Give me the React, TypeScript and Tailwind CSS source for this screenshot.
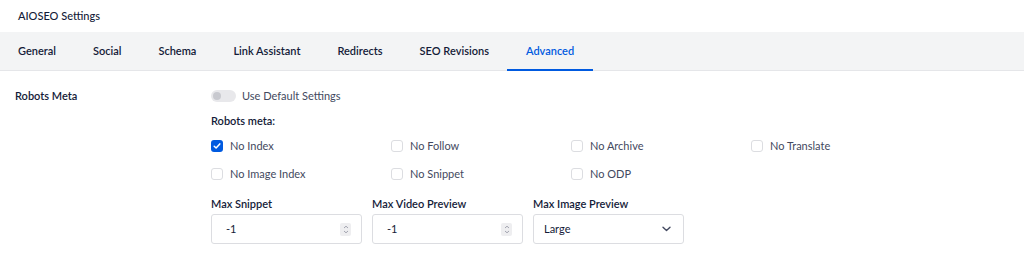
import React from "react";

const tabs = ["General", "Social", "Schema", "Link Assistant", "Redirects", "SEO Revisions", "Advanced"];

function Checkbox({ checked, label }: { checked?: boolean; label: string }) {
  return (
    <div className="flex items-center gap-[7px] w-[180px]">
      {checked ? (
        <span className="w-[12px] h-[12px] rounded-[3px] bg-[#005ae0] flex items-center justify-center">
          <svg width="8" height="8" viewBox="0 0 8 8" fill="none">
            <path d="M1.2 4.2 L3.1 6 L6.8 1.9" stroke="white" strokeWidth="1.5" strokeLinecap="round" strokeLinejoin="round" />
          </svg>
        </span>
      ) : (
        <span className="w-[12px] h-[12px] rounded-[3px] border border-[#dcdde1] bg-white" />
      )}
      <span className="text-[11px] text-[#434960]">{label}</span>
    </div>
  );
}

function NumberInput({ value, width }: { value: string; width: string }) {
  return (
    <div className={`h-[30px] ${width} border border-[#dcdde1] rounded-[3px] flex items-center justify-between pl-[14px] pr-[10px] bg-white`}>
      <span className="text-[11px] text-[#141b38]">{value}</span>
      <span className="w-[11px] h-[13px] bg-[#eeeef0] rounded-[2px] flex items-center justify-center">
        <svg width="6" height="9" viewBox="0 0 6 9" fill="none">
          <path d="M1 3 L3 1.2 L5 3" stroke="#9a9ca8" strokeWidth="0.9" />
          <path d="M1 6 L3 7.8 L5 6" stroke="#9a9ca8" strokeWidth="0.9" />
        </svg>
      </span>
    </div>
  );
}

export default function App() {
  return (
    <div className="w-[1024px] h-[258px] bg-white overflow-hidden" style={{ fontFamily: "Lato, 'Noto Sans', sans-serif" }}>
      <div className="h-[32px] flex items-center pl-[18px] text-[11px] font-medium text-[#141b38]">AIOSEO Settings</div>
      <div className="h-[39px] bg-[#f3f4f5] border-b border-[#e5e6e9] flex items-end">
        {tabs.map((t, i) => {
          const active = t === "Advanced";
          return (
            <div
              key={t}
              className={`h-[38px] flex items-center px-[18.5px] ${i === 0 ? "pl-[18px]" : ""} text-[11px] font-semibold ${
                active ? "text-[#005ae0] border-b-2 border-[#005ae0] -mb-px" : "text-[#141b38] border-b-2 border-transparent -mb-px"
              }`}
            >
              {t}
            </div>
          );
        })}
      </div>
      <div className="flex pt-[17px]">
        <div className="w-[211px] pl-[15px] text-[11px] font-semibold text-[#141b38] leading-[14px] pt-[1px]">Robots Meta</div>
        <div className="flex flex-col">
          <div className="flex items-center gap-[6px] h-[16px]">
            <span className="w-[25px] h-[12px] rounded-full bg-[#e8e8eb] relative">
              <span className="absolute left-[2px] top-[2px] w-[8px] h-[8px] rounded-full bg-[#c8c9cf]" />
            </span>
            <span className="text-[11px] text-[#434960]">Use Default Settings</span>
          </div>
          <div className="mt-[10px] text-[11px] font-semibold text-[#141b38] leading-[14px]">Robots meta:</div>
          <div className="mt-[10px] flex h-[16px]">
            <Checkbox checked label="No Index" />
            <Checkbox label="No Follow" />
            <Checkbox label="No Archive" />
            <Checkbox label="No Translate" />
          </div>
          <div className="mt-[12px] flex h-[16px]">
            <Checkbox label="No Image Index" />
            <Checkbox label="No Snippet" />
            <Checkbox label="No ODP" />
          </div>
          <div className="mt-[15px] flex gap-[10px]">
            <div className="flex flex-col">
              <div className="text-[11px] font-semibold text-[#141b38] leading-[14px] mb-[3px]">Max Snippet</div>
              <NumberInput value="-1" width="w-[151px]" />
            </div>
            <div className="flex flex-col">
              <div className="text-[11px] font-semibold text-[#141b38] leading-[14px] mb-[3px]">Max Video Preview</div>
              <NumberInput value="-1" width="w-[151px]" />
            </div>
            <div className="flex flex-col">
              <div className="text-[11px] font-semibold text-[#141b38] leading-[14px] mb-[3px]">Max Image Preview</div>
              <div className="h-[30px] w-[151px] border border-[#dcdde1] rounded-[3px] flex items-center justify-between pl-[10px] pr-[12px] bg-white">
                <span className="text-[11px] text-[#141b38]">Large</span>
                <svg width="9" height="6" viewBox="0 0 9 6" fill="none">
                  <path d="M1 1.2 L4.5 4.5 L8 1.2" stroke="#434960" strokeWidth="1.4" strokeLinecap="round" strokeLinejoin="round" />
                </svg>
              </div>
            </div>
          </div>
        </div>
      </div>
    </div>
  );
}
